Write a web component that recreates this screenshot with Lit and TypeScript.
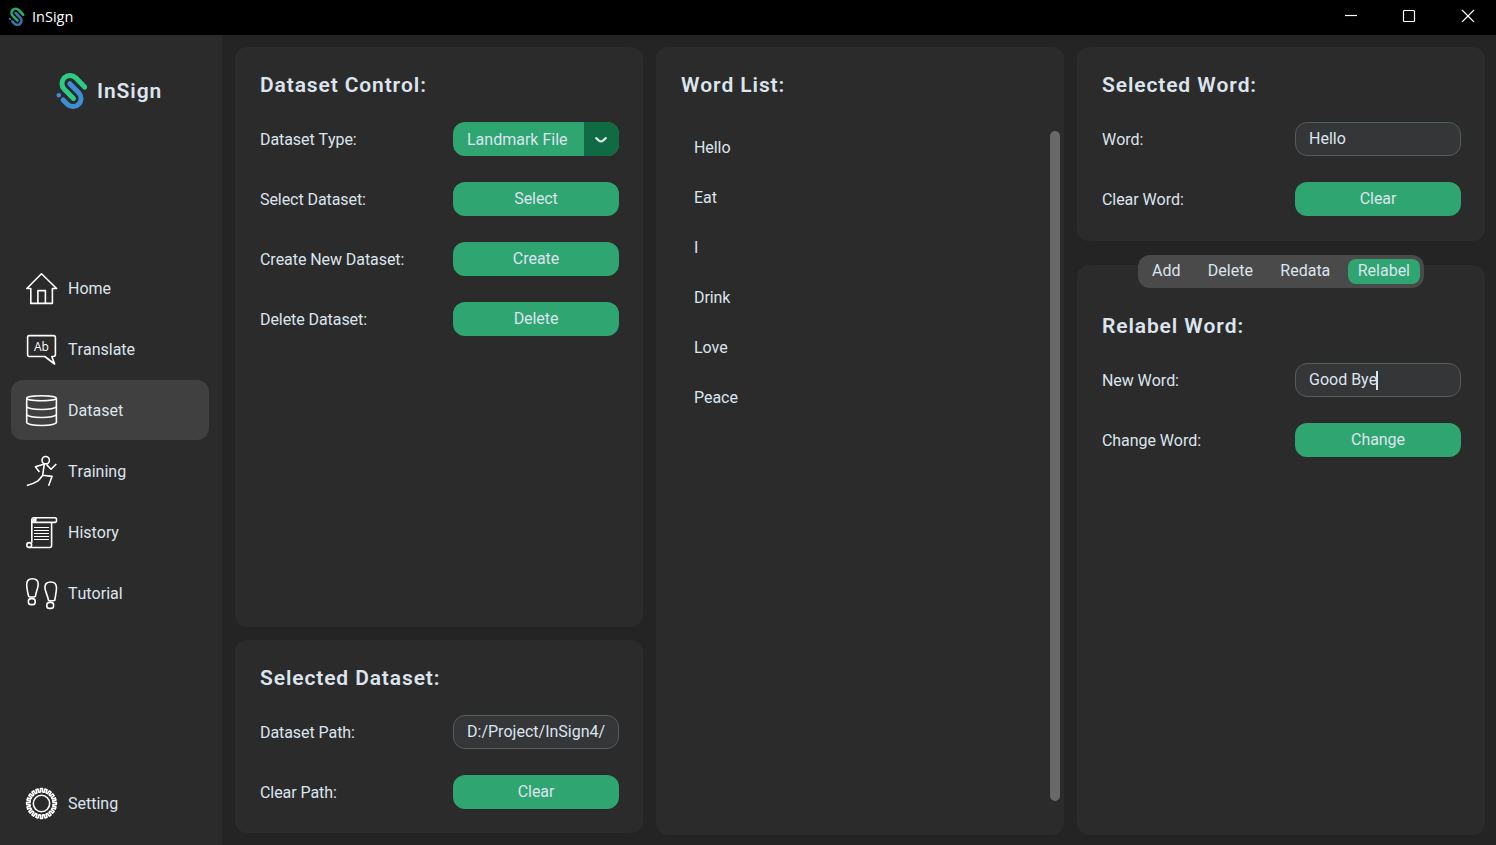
import { LitElement, html, svg, css } from "lit";
import { customElement, property } from "lit/decorators.js";
import { classMap } from "lit/directives/class-map.js";

const gearPath = (teeth: number, outer: number, inner: number): string => {
  const c = 15.5;
  const step = (Math.PI * 2) / teeth;
  const pt = (r: number, a: number) =>
    `${(c + r * Math.cos(a)).toFixed(2)} ${(c + r * Math.sin(a)).toFixed(2)}`;
  const parts: string[] = [];
  for (let i = 0; i < teeth; i++) {
    const a = i * step;
    parts.push(
      pt(inner, a - step * 0.27),
      pt(outer, a - step * 0.23),
      pt(outer, a + step * 0.23),
      pt(inner, a + step * 0.27)
    );
  }
  return "M" + parts.join("L") + "Z";
};

const icons: Record<string, unknown> = {
  Home: svg`<path d="M.8 15.5 15.5.8 30.6 15.5H26.4V30.4H4.8V15.5Z"/><path d="M11.9 30V17.6H19.4V30"/>`,
  Translate: svg`<path d="M3 1.6H27.5Q29.4 1.6 29.4 3.5V20.5Q29.4 22.5 27.5 22.5H25.8L28.6 30 18.8 22.5H3.4Q1.6 22.5 1.6 20.5V3.5Q1.6 1.6 3 1.6Z"/><text class="glyph" x="8" y="17">Ab</text>`,
  Dataset: svg`<ellipse cx="15.5" cy="3.2" rx="14.8" ry="2.5"/><path d="M.7 3.2V27.8C4 31.3 27 31.3 30.4 27.8V3.2M.7 11.8C4 15.3 27 15.3 30.4 11.8M.7 19.8C4 23.3 27 23.3 30.4 19.8"/>`,
  Training: svg`<circle cx="19.7" cy="4.2" r="3.7"/><path d="M18.3 7.8 16.7 19.2 26 20.4 22.6 29.8M13.4 16 9.4 10.8 18.3 7.9M20.6 8.6 25 13.2 30.3 8M16.7 19.2Q14 23 12 24.8 8 27.4.8 29.6"/>`,
  History: svg`<path d="M8 .7H29Q30.6.7 30.6 3T29 5.4H8Q5.8 5.4 5.8 3T8 .7ZM5.8 3V25.8M25.6 5.4V28.5Q25.6 30.5 23.8 30.5H2.6M9 .8Q10.8 3 8.8 5"/><circle cx="3.2" cy="28" r="2.4"/><circle cx="8" cy="3" r=".7"/><path class="thin" d="M8 10.5H23M8 13.5H23M8 16.5H23M8 19.5H23M8 22.5H23"/>`,
  Tutorial: svg`<path d="M2.6 18.4C1.4 13 .7 10 .7 6.4.8 2.6 3 .8 6.4.8 10 .8 12.2 3 12.2 6.2 12.2 10 10.2 13 9.4 18.4Q6 19.6 2.6 18.4ZM22.4 22.2C21.6 17 18.9 13 18.9 9.6 18.9 6 21 4 24.8 4 28.6 4 30.5 6 30.5 10 30.4 14 29.6 17 28.8 22.2Q25.6 23.4 22.4 22.2Z"/><rect x="2.4" y="20.6" width="6.8" height="6" rx="2.7"/><rect x="20.8" y="24.4" width="6.8" height="6" rx="2.7"/>`,
  Setting: svg`<path d=${gearPath(20, 14.9, 11.6)}/><circle cx="15.5" cy="15.5" r="8.2"/>`,
};

@customElement("insign-logo")
export class InsignLogo extends LitElement {
  static styles = css`
    :host { display: block; }
    svg { display: block; width: 100%; height: 100%; overflow: visible; }
    path { fill: none; stroke-width: 5; stroke-linecap: round; }
    .green { stroke: #2dcc86; }
    .blue { stroke: #3b8fd6; }
    .dot { fill: #3b8fd6; }
  `;
  render() {
    return html`<svg viewBox="0.5 0 31 37">
      <path class="blue" d="M13.3 11.7 22.2 20.8A8 8 0 0 1 10.8 32.2L6.6 28"/>
      <path class="green" d="M28.2 15.1 19.2 5.8A8 8 0 0 0 7.8 17.2L17 26.4"/>
      <circle class="dot" cx="2.3" cy="23.2" r="2.2"/>
    </svg>`;
  }
}

@customElement("nav-item")
export class NavItem extends LitElement {
  @property() label = "";
  @property({ type: Boolean }) active = false;
  static styles = css`
    :host { display: block; }
    .item {
      display: flex; align-items: center; gap: 10px;
      height: 60px; padding: 0 15px; box-sizing: border-box;
      border-radius: 12px; line-height: 20px;
    }
    .item span { padding-top: 2px; }
    .active { background: #404040; }
    svg {
      width: 32px; height: 32px; margin-top: 2px; overflow: visible;
      fill: none; stroke: #fff; stroke-width: 1.6; stroke-linejoin: round;
    }
    .thin { stroke-width: 1; }
    .glyph { font: 12px "Open Sans", sans-serif; fill: #fff; stroke: none; }
  `;
  render() {
    return html`<div class=${classMap({ item: true, active: this.active })}>
      <svg viewBox="0 0 32 32">${icons[this.label]}</svg>
      <span>${this.label}</span>
    </div>`;
  }
}

@customElement("form-row")
export class FormRow extends LitElement {
  @property() label = "";
  @property() kind: "button" | "entry" | "option" = "button";
  @property() value = "";
  @property({ type: Boolean }) focused = false;
  static styles = css`
    :host { display: block; }
    .row { display: flex; justify-content: space-between; height: 34px; }
    .label { line-height: 35px; letter-spacing: -0.07px; }
    .control {
      width: 166px; height: 34px; box-sizing: border-box;
      border-radius: 12px; line-height: 33px; overflow: hidden; white-space: nowrap;
    }
    .button { background: #2fa572; text-align: center; letter-spacing: -0.08px; }
    .entry { display: flex; align-items: center; background: #343638; border: 1px solid #565b5e; padding: 0 13px; }
    .text { line-height: 31px; padding-bottom: 1px; }
    .caret { width: 2px; height: 19px; margin-left: -1px; background: #dce4ee; }
    .option { display: flex; background: #2fa572; }
    .choice { width: 131px; padding-left: 14px; box-sizing: border-box; line-height: 35px; }
    .arrow { width: 35px; box-sizing: border-box; padding: 1px 1px 0 0; display: grid; place-items: center; background: #106a43; }
    .arrow svg { width: 12px; height: 6px; overflow: visible; fill: none; stroke: #dce4ee; stroke-width: 2.3; stroke-linecap: round; }
  `;
  private control() {
    if (this.kind === "entry")
      return html`<div class="control entry"><span class="text">${this.value}</span>${this.focused ? html`<span class="caret"></span>` : ""}</div>`;
    if (this.kind === "option")
      return html`<div class="control option">
        <span class="choice">${this.value}</span>
        <span class="arrow"><svg viewBox="0 0 12 6"><path d="M1.2 1.2 4 3.6Q6 5.2 8 3.6L10.8 1.2"/></svg></span>
      </div>`;
    return html`<div class="control button">${this.value}</div>`;
  }
  render() {
    return html`<div class="row"><span class="label">${this.label}</span>${this.control()}</div>`;
  }
}

@customElement("app-root")
export class AppRoot extends LitElement {
  static styles = css`
    :host {
      display: flex; flex-direction: column;
      height: 100vh; overflow: hidden;
      background: #242424; color: #dce4ee;
      font: 16px Roboto, sans-serif; font-kerning: none;
    }
    .titlebar {
      display: flex; align-items: center; height: 35px; flex: none;
      background: #000; color: #fff;
    }
    .mini { width: 16px; height: 19px; margin: -3px 7px 0 9px; opacity: 0.85; }
    .name { font: 14.5px/20px "Open Sans", sans-serif; flex: 1; margin-top: -2px; }
    .window { display: flex; margin-right: 21px; gap: 45px; margin-top: -5px; }
    .window svg { width: 14px; height: 14px; fill: none; stroke: #fff; stroke-width: 1.2; }
    .body { flex: 1; display: flex; min-height: 0; }
    .sidebar {
      width: 222px; box-sizing: border-box; background: #2b2b2b;
      display: flex; flex-direction: column; padding: 37px 13px 12px 11px;
    }
    .brand { display: flex; align-items: center; gap: 9px; padding-left: 46px; height: 37px; }
    .brand insign-logo { width: 31px; height: 37px; }
    .brand span { font-size: 21px; font-weight: 600; letter-spacing: 0.9px; }
    .nav { display: flex; flex-direction: column; gap: 1px; margin-top: 149px; }
    .bottom { margin-top: auto; }
    .content {
      flex: 1; display: grid; grid-template-columns: repeat(3, 408px);
      column-gap: 13px; padding: 12px 11px 10px 13px;
    }
    .column { display: flex; flex-direction: column; min-height: 0; }
    .panel { background: #2b2b2b; border-radius: 12px; padding: 24px 24px 0 25px; box-sizing: border-box; }
    .panel h2 { margin: 0 0 23px; font-size: 21px; line-height: 28px; font-weight: 600; letter-spacing: 0.88px; }
    .rows { display: flex; flex-direction: column; gap: 26px; }
    .control-panel { height: 580px; margin-bottom: 13px; }
    .dataset-panel { height: 193px; }
    .word-panel { height: 194px; margin-bottom: 14px; }
    .list-panel { flex: 1; padding-right: 4px; }
    .list-panel h2 { margin-bottom: 32px; }
    .scroll { display: flex; justify-content: space-between; }
    .words { list-style: none; margin: -8px 0 0; padding: 0 0 0 13px; line-height: 50px; letter-spacing: -0.07px; }
    .words li { height: 50px; }
    .thumb { width: 10px; height: 670px; border-radius: 5px; background: #696969; }
    .tabs-area { flex: 1; display: flex; flex-direction: column; }
    .tabs {
      align-self: center; display: flex; justify-content: space-between; box-sizing: border-box;
      width: 286px; height: 33px; padding: 4px; border-radius: 12px; background: #4a4a4a;
      z-index: 1; line-height: 23px; margin-bottom: -23px;
    }
    .tab { height: 25px; padding: 0 10px; border-radius: 8px; }
    .on { background: #2fa572; }
    .tab-body { flex: 1; padding-top: 47px; }
  `;
  private nav = ["Home", "Translate", "Dataset", "Training", "History", "Tutorial"];
  private words = ["Hello", "Eat", "I", "Drink", "Love", "Peace"];
  private tabs = ["Add", "Delete", "Redata", "Relabel"];

  render() {
    return html`
      <header class="titlebar">
        <insign-logo class="mini"></insign-logo>
        <span class="name">InSign</span>
        <div class="window">
          <svg viewBox="0 0 14 14"><path d="M2 7.5H14"/></svg>
          <svg viewBox="0 0 14 14"><rect x="1.5" y="2.5" width="11" height="11" rx="1"/></svg>
          <svg viewBox="0 0 14 14"><path d="M1 2 13 14M13 2 1 14"/></svg>
        </div>
      </header>
      <div class="body">
        <aside class="sidebar">
          <div class="brand"><insign-logo></insign-logo><span>InSign</span></div>
          <nav class="nav">
            ${this.nav.map((n) => html`<nav-item .label=${n} .active=${n === "Dataset"}></nav-item>`)}
          </nav>
          <nav-item class="bottom" label="Setting"></nav-item>
        </aside>
        <main class="content">
          <div class="column">
            <section class="panel control-panel">
              <h2>Dataset Control:</h2>
              <div class="rows">
                <form-row label="Dataset Type:" kind="option" value="Landmark File"></form-row>
                <form-row label="Select Dataset:" value="Select"></form-row>
                <form-row label="Create New Dataset:" value="Create"></form-row>
                <form-row label="Delete Dataset:" value="Delete"></form-row>
              </div>
            </section>
            <section class="panel dataset-panel">
              <h2>Selected Dataset:</h2>
              <div class="rows">
                <form-row label="Dataset Path:" kind="entry" value="D:/Project/InSign4/"></form-row>
                <form-row label="Clear Path:" value="Clear"></form-row>
              </div>
            </section>
          </div>
          <div class="column">
            <section class="panel list-panel">
              <h2>Word List:</h2>
              <div class="scroll">
                <ul class="words">${this.words.map((w) => html`<li>${w}</li>`)}</ul>
                <div class="thumb"></div>
              </div>
            </section>
          </div>
          <div class="column">
            <section class="panel word-panel">
              <h2>Selected Word:</h2>
              <div class="rows">
                <form-row label="Word:" kind="entry" value="Hello"></form-row>
                <form-row label="Clear Word:" value="Clear"></form-row>
              </div>
            </section>
            <div class="tabs-area">
              <div class="tabs">
                ${this.tabs.map((t) => html`<span class=${classMap({ tab: true, on: t === "Relabel" })}>${t}</span>`)}
              </div>
              <section class="panel tab-body">
                <h2>Relabel Word:</h2>
                <div class="rows">
                  <form-row label="New Word:" kind="entry" value="Good Bye" focused></form-row>
                  <form-row label="Change Word:" value="Change"></form-row>
                </div>
              </section>
            </div>
          </div>
        </main>
      </div>
    `;
  }
}
